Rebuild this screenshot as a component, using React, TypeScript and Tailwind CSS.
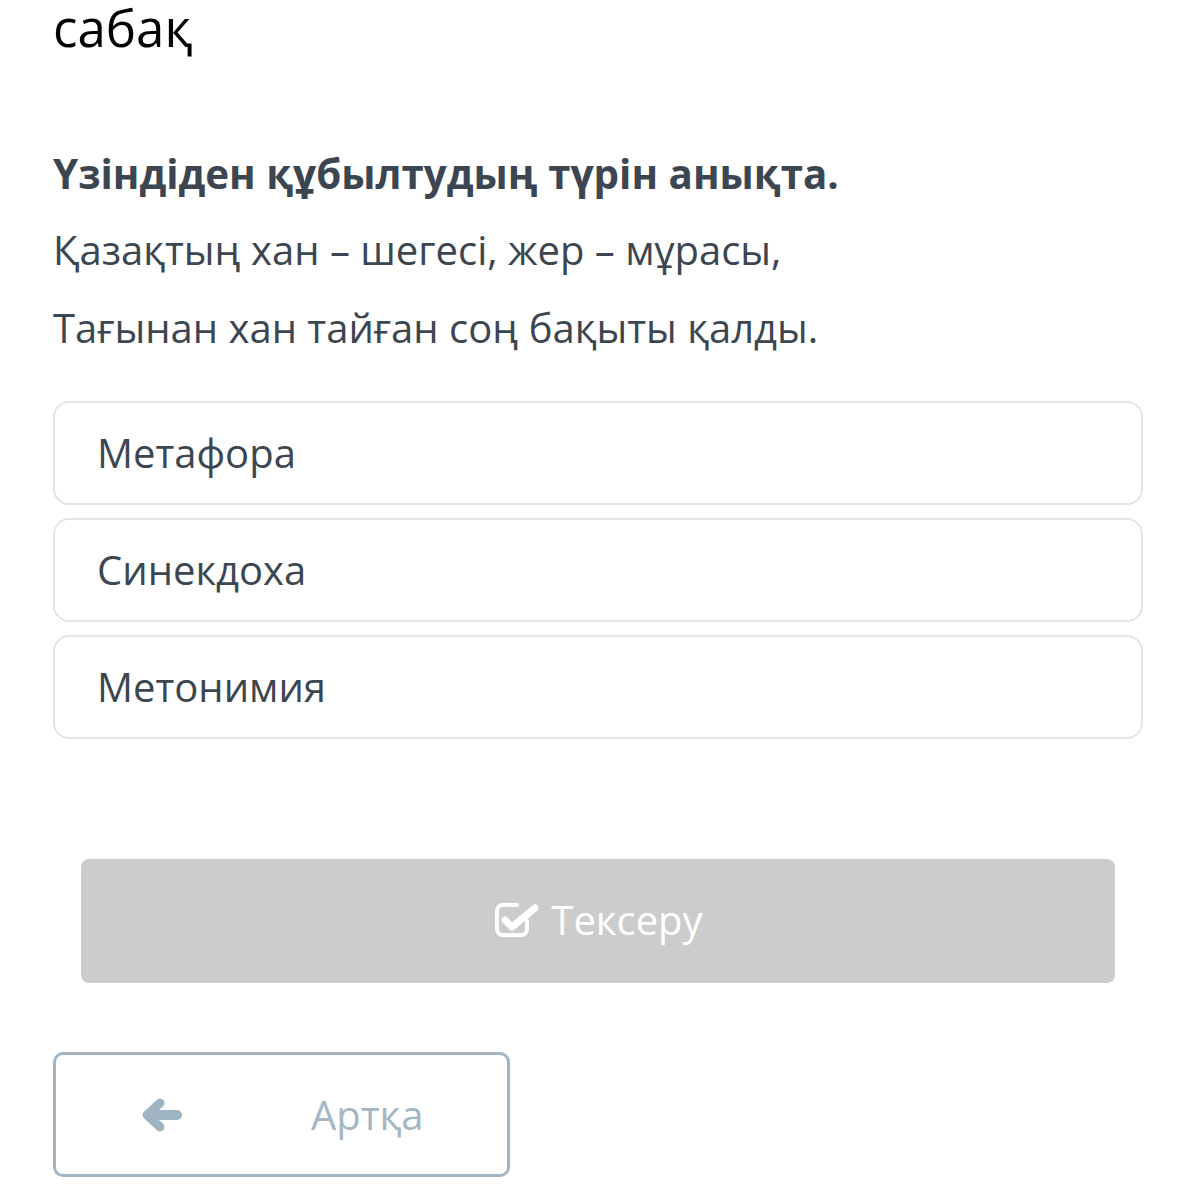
const options = ["Метафора", "Синекдоха", "Метонимия"];

function CheckIcon() {
  return (
    <svg width="46" height="40" viewBox="0 0 46 40" fill="none">
      <path
        d="M24 4H10a6 6 0 0 0-6 6v18a6 6 0 0 0 6 6h18a6 6 0 0 0 6-6v-8"
        stroke="white"
        strokeWidth="4"
        strokeLinecap="round"
      />
      <path
        d="M12 19l7 7L42 7"
        stroke="white"
        strokeWidth="7"
        strokeLinecap="round"
        strokeLinejoin="round"
      />
    </svg>
  );
}

function BackArrow() {
  return (
    <svg width="44" height="38" viewBox="0 0 44 38" fill="none">
      <path
        d="M19 7L6 19l13 12"
        stroke="#9fb4c3"
        strokeWidth="9"
        strokeLinecap="round"
        strokeLinejoin="round"
      />
      <path d="M10 19h26" stroke="#9fb4c3" strokeWidth="10" strokeLinecap="round" />
    </svg>
  );
}

export default function App() {
  return (
    <main
      className="min-h-[1200px] bg-white"
      style={{ fontFamily: '"Open Sans", "Noto Sans", sans-serif' }}
    >
      <div className="pl-[53px] pr-[55px]">
        {/* Lesson title (cut off at top) */}
        <div className="pt-[2px] text-[51px] leading-[50px] text-black">сабақ</div>

        {/* Question */}
        <h2 className="mt-[96px] text-[40.3px] font-bold leading-[52px] text-[#3c4650]">
          Үзіндіден құбылтудың түрін анықта.
        </h2>
        <p className="mt-[24px] text-[40px] leading-[52px] text-[#3c4650]">
          Қазақтың хан – шегесі, жер – мұрасы,
        </p>
        <p className="mt-[26px] text-[40px] leading-[52px] text-[#3c4650]">
          Тағынан хан тайған соң бақыты қалды.
        </p>

        {/* Options */}
        <div className="mt-[47px] flex flex-col gap-[13px]">
          {options.map((o) => (
            <div
              key={o}
              className="flex h-[104px] items-center rounded-[16px] border-2 border-[#e1e5ea] px-[42px] text-[40px] text-[#3c4650]"
            >
              {o}
            </div>
          ))}
        </div>

        {/* Check button */}
        <div className="mt-[120px] px-[28px]">
          <button className="flex h-[124px] w-full items-center justify-center gap-[12px] rounded-[8px] bg-[#cccccc] text-[40px] text-white">
            <CheckIcon />
            <span className="pb-[2px]">Тексеру</span>
          </button>
        </div>

        {/* Back button */}
        <button className="mt-[69px] flex h-[125px] w-[457px] items-center rounded-[10px] border-[3px] border-[#a3b5c3] text-[40px] text-[#a3b6c4]">
          <span className="ml-[85px] flex">
            <BackArrow />
          </span>
          <span className="ml-[126px]">Артқа</span>
        </button>
      </div>
    </main>
  );
}
